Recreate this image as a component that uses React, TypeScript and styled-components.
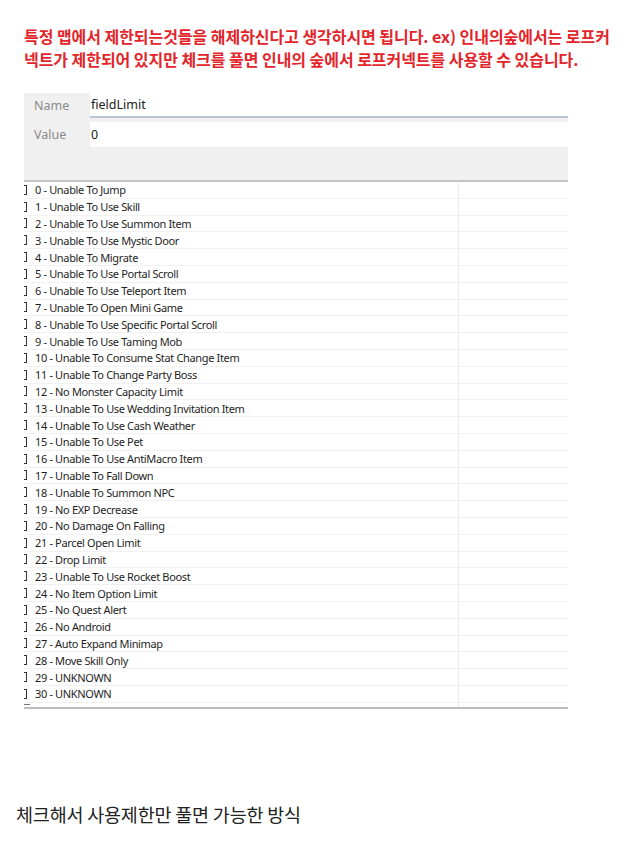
import styled, { createGlobalStyle } from 'styled-components';

const GlobalStyle = createGlobalStyle`
  body {
    margin: 0;
    background: #ffffff;
    font-family: 'Noto Sans', 'Noto Sans CJK KR', sans-serif;
  }
`;

const Page = styled.div`
  width: 640px;
  min-height: 855px;
  padding-top: 25px;
  box-sizing: border-box;
`;

const Notice = styled.p`
  margin: 0 0 0 24px;
  color: #e3252b;
  font-family: 'Noto Sans CJK KR', sans-serif;
  font-weight: 700;
  font-size: 16px;
  line-height: 23px;
  letter-spacing: -0.05px;
  white-space: nowrap;
`;

const Panel = styled.div`
  margin: 22px 0 0 24px;
  width: 544px;
  overflow: hidden;
`;

const PropsArea = styled.div`
  background: #f0f0f0;
  height: 87px;
  display: flex;
  flex-direction: column;
  gap: 4px;
  border-bottom: 2px solid #c4c4c4;
`;

const PropRow = styled.div`
  display: grid;
  grid-template-columns: 66px 1fr;
  height: 25px;
  align-items: stretch;
`;

const PropLabel = styled.div`
  color: #8a8a8a;
  font-size: 12.5px;
  padding-left: 10px;
  display: flex;
  align-items: center;
`;

const PropField = styled.div<{ $active?: boolean }>`
  background: #ffffff;
  color: #222;
  font-size: 12.5px;
  display: flex;
  align-items: center;
  padding-left: 1px;
  border-bottom: ${(p) => (p.$active ? '2px solid #b8c6d4' : '0')};
  box-sizing: border-box;
`;

const List = styled.div`
  position: relative;
  background: #ffffff;
  border-bottom: 2px solid #bdbdbd;
  box-shadow: 0 2px 2px #ececec;
`;

const ColumnLine = styled.div`
  position: absolute;
  top: 0;
  bottom: 0;
  left: 434px;
  width: 1px;
  background: #ececec;
`;

const Row = styled.div`
  height: 16.8px;
  display: flex;
  align-items: center;
  border-bottom: 1px solid #f1f1f1;
  box-sizing: border-box;
  font-size: 11px;
  letter-spacing: -0.35px;
  color: #1e1e1e;
`;

const Check = styled.span`
  width: 10px;
  height: 10px;
  border: 1px solid #333;
  margin-left: -7px;
  margin-right: 8px;
  flex: none;
  box-sizing: border-box;
`;

const Tail = styled.div`
  height: 4px;
  position: relative;
  &::before {
    content: '';
    position: absolute;
    left: 0;
    top: 1px;
    width: 6px;
    height: 1px;
    background: #777;
  }
`;

const Caption = styled.p`
  margin: 92px 0 0 16px;
  color: #222;
  font-family: 'Noto Sans CJK KR', sans-serif;
  font-size: 18.5px;
  letter-spacing: -0.2px;
  line-height: 26px;
`;

const flags = [
  'Unable To Jump',
  'Unable To Use Skill',
  'Unable To Use Summon Item',
  'Unable To Use Mystic Door',
  'Unable To Migrate',
  'Unable To Use Portal Scroll',
  'Unable To Use Teleport Item',
  'Unable To Open Mini Game',
  'Unable To Use Specific Portal Scroll',
  'Unable To Use Taming Mob',
  'Unable To Consume Stat Change Item',
  'Unable To Change Party Boss',
  'No Monster Capacity Limit',
  'Unable To Use Wedding Invitation Item',
  'Unable To Use Cash Weather',
  'Unable To Use Pet',
  'Unable To Use AntiMacro Item',
  'Unable To Fall Down',
  'Unable To Summon NPC',
  'No EXP Decrease',
  'No Damage On Falling',
  'Parcel Open Limit',
  'Drop Limit',
  'Unable To Use Rocket Boost',
  'No Item Option Limit',
  'No Quest Alert',
  'No Android',
  'Auto Expand Minimap',
  'Move Skill Only',
  'UNKNOWN',
  'UNKNOWN',
];

export default function App() {
  return (
    <Page>
      <GlobalStyle />
      <Notice>
        특정 맵에서 제한되는것들을 해제하신다고 생각하시면 됩니다. ex) 인내의숲에서는 로프커
        <br />
        넥트가 제한되어 있지만 체크를 풀면 인내의 숲에서 로프커넥트를 사용할 수 있습니다.
      </Notice>
      <Panel>
        <PropsArea>
          <PropRow>
            <PropLabel>Name</PropLabel>
            <PropField $active>fieldLimit</PropField>
          </PropRow>
          <PropRow>
            <PropLabel>Value</PropLabel>
            <PropField>0</PropField>
          </PropRow>
        </PropsArea>
        <List>
          <ColumnLine />
          {flags.map((f, i) => (
            <Row key={i}>
              <Check />
              {i} - {f}
            </Row>
          ))}
          <Tail />
        </List>
      </Panel>
      <Caption>체크해서 사용제한만 풀면 가능한 방식</Caption>
    </Page>
  );
}
